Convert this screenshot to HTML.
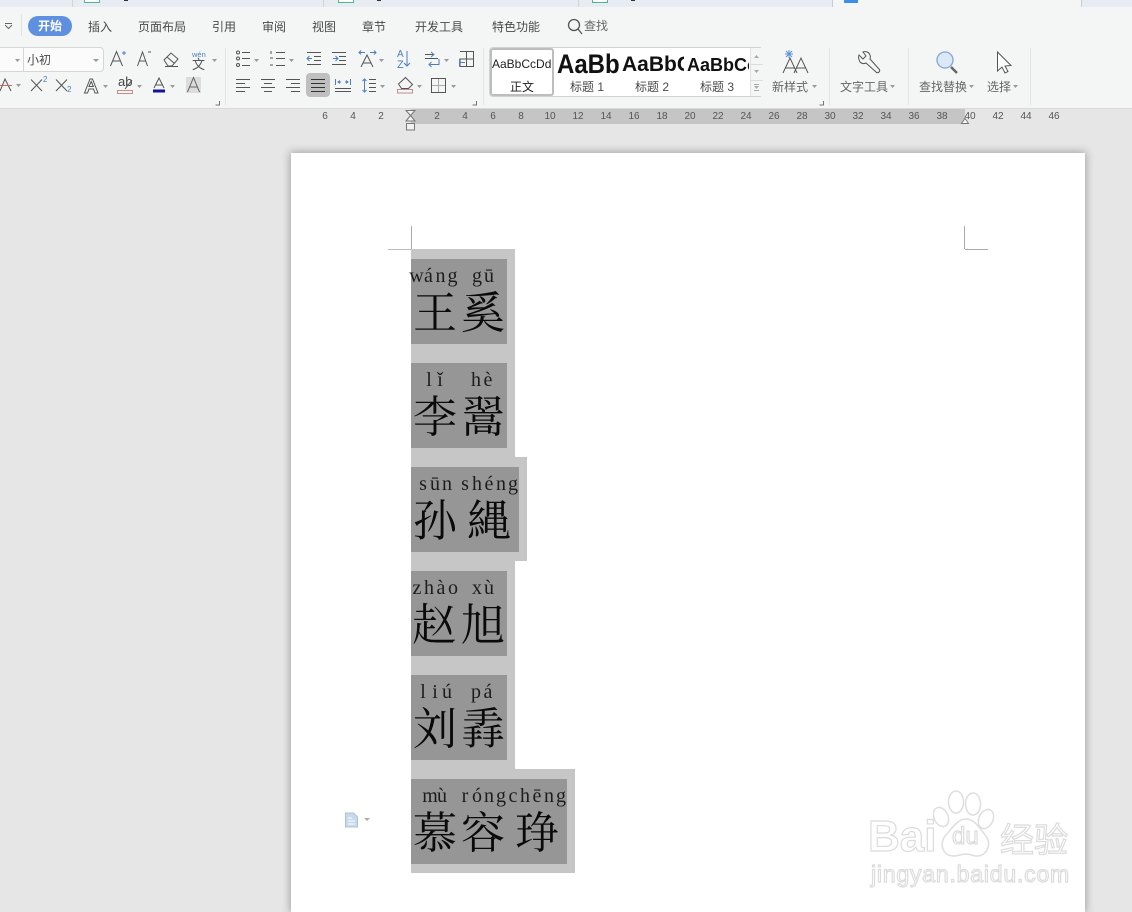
<!DOCTYPE html>
<html lang="zh"><head><meta charset="utf-8"><title>文档</title>
<style>
html,body{margin:0;padding:0;width:1132px;height:912px;overflow:hidden}
body{position:relative;background:#e6e6e6;font-family:"Liberation Sans","Noto Sans CJK SC",sans-serif;color:#4a4a4a}
.a{position:absolute;white-space:nowrap}
.t{position:absolute;white-space:nowrap;font-size:12px;line-height:16px;color:#4a4a4a}
#tabs{position:absolute;left:0;top:0;width:1132px;height:7px;background:#e7ebf3;border-bottom:1px solid #d3d6dc}
#rib{position:absolute;left:0;top:7px;width:1132px;height:102px;background:#f4f5f5;border-bottom:1px solid #d9d9d9;box-sizing:border-box}
#rul{position:absolute;left:411px;top:109px;width:554px;height:15px;background:#c5c5c5}
.n{position:absolute;top:110px;width:20px;text-align:center;font-size:10px;line-height:14px;color:#555}
#page{position:absolute;left:291px;top:153px;width:794px;height:759px;background:#fff;box-shadow:0 0 8px 1px rgba(0,0,0,.3)}
.o{position:absolute;background:#c6c6c6}
.i{position:absolute;background:#969696;left:411px;height:85px}
.hz{position:absolute;font-family:"Noto Serif CJK SC","Liberation Serif",serif;font-size:44px;line-height:50px;color:#0a0a0a;white-space:nowrap}
.wm{position:absolute;color:#fff;-webkit-text-stroke:1.2px #dcdcdc;white-space:nowrap}
</style></head><body>
<div id="tabs"></div>
<div class="a" style="left:72px;top:0;width:1px;height:7px;background:#cfd3da"></div>
<div class="a" style="left:323px;top:0;width:1px;height:7px;background:#cfd3da"></div>
<div class="a" style="left:578px;top:0;width:1px;height:7px;background:#cfd3da"></div>
<div class="a" style="left:832px;top:0;width:250px;height:8px;background:#f4f5f5;border-left:1px solid #c9ccd3;border-right:1px solid #c9ccd3;box-sizing:border-box"></div>
<div class="a" style="left:84px;top:0;width:14px;height:2px;background:#fff;border:1px solid #4fb58a;border-top:0"></div>
<div class="a" style="left:338px;top:0;width:14px;height:2px;background:#fff;border:1px solid #4fb58a;border-top:0"></div>
<div class="a" style="left:592px;top:0;width:14px;height:2px;background:#fff;border:1px solid #4fb58a;border-top:0"></div>
<div class="a" style="left:124px;top:0;width:4px;height:1px;background:#333"></div>
<div class="a" style="left:377px;top:0;width:4px;height:1px;background:#333"></div>
<div class="a" style="left:631px;top:0;width:4px;height:1px;background:#333"></div>
<div class="a" style="left:844px;top:0;width:14px;height:3px;background:#3d8ee8"></div>
<div id="rib"></div>

<div class="a" style="left:28px;top:16px;width:44px;height:20px;border-radius:10px;background:#5f90e0;color:#fff;font-size:12px;font-weight:bold;line-height:20px;text-align:center">开始</div>
<span class="t" style="left:88px;top:19px">插入</span>
<span class="t" style="left:138px;top:19px">页面布局</span>
<span class="t" style="left:212px;top:19px">引用</span>
<span class="t" style="left:262px;top:19px">审阅</span>
<span class="t" style="left:312px;top:19px">视图</span>
<span class="t" style="left:362px;top:19px">章节</span>
<span class="t" style="left:415px;top:19px">开发工具</span>
<span class="t" style="left:492px;top:19px">特色功能</span>
<span class="t" style="left:584px;top:18px;color:#666">查找</span>

<!-- font box -->
<div class="a" style="left:-10px;top:47px;width:112px;height:23px;background:#fbfbfb;border:1px solid #d6d6d6;border-radius:4px"></div>
<div class="a" style="left:23px;top:48px;width:1px;height:23px;background:#d6d6d6"></div>
<span class="t" style="left:27px;top:52px">小初</span>

<!-- Styles box -->
<div class="a" style="left:489px;top:47px;width:274px;height:50px;box-sizing:border-box;background:#fff;border:1px solid #d2d2d2;border-radius:4px"></div>
<div class="a" style="left:490px;top:48px;width:64px;height:48px;box-sizing:border-box;background:#fff;border:2px solid #bdbdbd;border-radius:3px"></div>
<div class="a" style="left:750px;top:48px;width:12px;height:48px;background:#f4f5f5;border-left:1px solid #e2e2e2;overflow:hidden"></div>
<div class="a" style="left:750px;top:64px;width:13px;height:1px;background:#ddd"></div>
<div class="a" style="left:750px;top:80px;width:13px;height:1px;background:#ddd"></div>
<div class="a" style="left:492px;top:56px;font-size:12px;line-height:16px;color:#222">AaBbCcDd</div>
<div class="a" style="left:557px;top:49px;width:63px;overflow:hidden;font-size:24px;font-weight:bold;line-height:32px;color:#111;transform:scaleY(1.12)">AaBbCc</div>
<div class="a" style="left:622px;top:52px;width:62px;overflow:hidden;font-size:21px;font-weight:bold;line-height:26px;color:#111">AaBbCc</div>
<div class="a" style="left:687px;top:53px;width:62px;overflow:hidden;font-size:18px;font-weight:bold;line-height:24px;color:#111">AaBbCc</div>
<span class="t" style="left:510px;top:79px;color:#222">正文</span>
<span class="t" style="left:570px;top:79px">标题 1</span>
<span class="t" style="left:635px;top:79px">标题 2</span>
<span class="t" style="left:700px;top:79px">标题 3</span>

<span class="t" style="left:772px;top:79px;color:#666">新样式</span>
<span class="t" style="left:840px;top:79px;color:#666">文字工具</span>
<span class="t" style="left:919px;top:79px;color:#666">查找替换</span>
<span class="t" style="left:987px;top:79px;color:#666">选择</span>

<div class="a" style="left:306px;top:73px;width:24px;height:24px;border-radius:4px;background:#bfbfbf"></div>
<div class="a" style="left:186px;top:77px;width:15px;height:16px;background:#dcdcdc"></div>

<!-- text glyph icons -->
<span class="a" style="left:192px;top:51px;font-size:7.500px;line-height:8px;color:#4a7fc0">wén</span>
<span class="a" style="left:192px;top:58px;font-size:13px;line-height:13px;color:#555">文</span>
<span class="a" style="left:43px;top:75px;font-size:8px;line-height:10px;color:#4a7fc0">2</span>
<span class="a" style="left:67px;top:85px;font-size:8px;line-height:10px;color:#4a7fc0">2</span>
<span class="a" style="left:118px;top:75px;font-size:13px;line-height:14px;color:#444">ab</span>
<span class="a" style="left:397px;top:50px;font-size:10px;line-height:10px;color:#4a7fc0">A</span>
<span class="a" style="left:397px;top:60px;font-size:11px;line-height:11px;color:#4a7fc0">Z</span>

<svg class="a" style="left:0;top:0" width="1132" height="135" viewBox="0 0 1132 135" fill="none" stroke="#555" stroke-width="1">
<path d="M5 23.500h7M5 25l3.500 3.500L12 25" stroke="#666"/>
<path d="M21.500 14V36" stroke="#e2e2e2"/>
<circle cx="574" cy="25" r="5.500" stroke="#555" stroke-width="1.300"/><path d="M578 29l4 5" stroke="#555" stroke-width="1.300"/>
<!-- dividers -->
<path d="M225.500 48V105M829.500 48V105M908.500 48V105M1030.500 48V105M483.500 48V105" stroke="#e4e4e4"/>
<!-- launchers -->
<path d="M219.500 101v4h-4M476.500 101v4h-4M823.500 101v4h-4" stroke="#777"/>
<!-- A+ A- -->
<path d="M110.500 66l6-14.500 6 14.500M112.500 61h8" stroke="#555"/><path d="M122 53h4M124 51v4" stroke="#4a7fc0"/>
<path d="M137.500 66l5-14 5 14M139 61h7" stroke="#555"/><path d="M148 52h3" stroke="#555"/>
<!-- eraser -->
<path d="M164 60l7-7 7 6-6 7h-4zM167 57l7 6M165 66.500h13" stroke="#555"/>
<!-- strike A at left -->
<path d="M0 91l5-12 6 12" stroke="#555"/><path d="M0 85.500h12" stroke="#d9645e"/>
<!-- X2 -->
<path d="M31 79.500l11 11.500M42 79.500L31 91M56 79.500l11 11.500M67 79.500L56 91" stroke="#555"/>
<!-- outlined A -->
<path d="M84.500 93l5.500-14h2.500l5.500 14h-3l-1.500-4h-4.500l-1.500 4zM89 86.500l2.200-5 2.200 5z" stroke="#555"/>
<!-- highlight -->
<path d="M117.500 90.500h15v3h-15z" stroke="#c98a8a"/><path d="M125 89l7-9" stroke="#555"/>
<!-- font colour -->
<path d="M154 88l5-10 5 10M155.500 85h7" stroke="#555"/>
<rect x="153" y="89.500" width="12" height="3" fill="#13139a" stroke="none"/>
<!-- shaded A -->
<path d="M187.500 92l6-14.500 6 14.500M189.500 87h8" stroke="#666"/>
<!-- lists -->
<g stroke="#555">
<circle cx="238" cy="52.500" r="1.500"/><circle cx="238" cy="58.500" r="1.500"/><circle cx="238" cy="65" r="1.500"/>
<path d="M242 52.500h8M242 58.500h8M242 65.500h8"/>
<path d="M271 51v3M270 58h3M270 65h3"/><path d="M276 52.500h9M276 58.500h9M276 65.500h9"/>
<path d="M307 52.500h14M314 56.500h7M314 60.500h7M307 64.500h14"/><path d="M312 58.500h-5m2.500-2.500l-2.500 2.500 2.500 2.500" stroke="#4a7fc0"/>
<path d="M332 52.500h14M339 56.500h7M339 60.500h7M332 64.500h14"/><path d="M333 58.500h5m-2.500-2.500l2.500 2.500-2.500 2.500" stroke="#4a7fc0"/>
<!-- widen A -->
<path d="M361 67l6-12 6 12M363 63h8" stroke="#555"/>
<path d="M359 52.500h6M370 52.500h6M361 50.500l-2 2 2 2M374 50.500l2 2-2 2" stroke="#4a7fc0"/>
<path d="M407 51v15m-3-3l3 3 3-3" stroke="#4a7fc0"/>
<path d="M425 54.500h8M425 58.500h13" stroke="#555"/><path d="M431 52l3 2.500-3 2.500M439 59v5.500h-10m2.500-2.500l-2.500 2.500 2.500 2.500" stroke="#4a7fc0"/>
<path d="M460 51.500h13.500V66.500H460V59h14M466.500 51.500v15" stroke="#555"/><path d="M459.500 59v7.500M460 62.500h5" stroke="#4a7fc0"/>
<path d="M236 79.500h14M236 83.500h9M236 87.500h14M236 91.500h9"/>
<path d="M261 79.500h14M264 83.500h8M261 87.500h14M264 91.500h8"/>
<path d="M286 79.500h14M291 83.500h9M286 87.500h14M291 91.500h9"/>
<path d="M311 79.500h14M311 83.500h14M311 87.500h14M311 91.500h14" stroke="#333"/>
<path d="M335 88.500h16M335 91.500h16"/><path d="M335.500 79v6M350.500 79v6M338 82h3m-1-1.500l-2 1.500 2 1.500M348 82h-3m1-1.500l2 1.500-2 1.500" stroke="#4a7fc0"/>
<path d="M369 79.500h7M369 83.500h7M369 87.500h7M369 91.500h7"/><path d="M364.500 79v13m-2-11l2-2 2 2m-4 9l2 2 2-2" stroke="#4a7fc0"/>
<path d="M398.500 84l7-6.500 7 7-4 4h-7z"/><path d="M397.500 89.500h15v3.500h-15z" stroke="#c08e8e"/>
<rect x="431.500" y="78.500" width="14" height="14"/><path d="M438.500 79v13M432 85.500h13" stroke="#aaa"/>
</g>
<!-- dropdown arrows -->
<g fill="#999" stroke="none">
<path d="M15 59h5l-2.500 3zM93 59h6l-3 3zM212 59h5l-2.500 3zM254 59h5l-2.500 3zM289 59h5l-2.500 3zM379 59h5l-2.500 3zM444 59h5l-2.500 3zM16 84h5l-2.500 3zM103 85h5l-2.500 3zM137 85h5l-2.500 3zM170 85h5l-2.500 3zM380 85h5l-2.500 3zM417 85h5l-2.500 3zM451 85h5l-2.500 3zM812 85h5l-2.500 3zM890 85h5l-2.500 3zM969 85h5l-2.500 3zM1013 85h5l-2.500 3z"/>
<path d="M754 58h5l-2.500-3zM754 70h5l-2.500 3z" fill="#aaa"/><path d="M754 86h5l-2.500 3z" fill="#aaa"/>
</g>
<path d="M754 84.500h5M754 90.500h5" stroke="#aaa"/>
<!-- 新样式 -->
<path d="M789 50v8M785 54h8M786 51l6 6M792 51l-6 6" stroke="#5a93d8"/>
<path d="M783 73l7-15 7 15M785.500 68h9M794 73l7-15 7 15M796.500 68h9" stroke="#555"/>
<!-- wrench -->
<path d="M859 55l4 4 3-3-3-4c3-1 6 0 7 3 1 2 0 3 0 4l9 10c1 1 1 2 0 3-1 1-2 1-3 0l-10-9c-2 1-4 1-6-1-1-2-2-5-1-7z" stroke="#555"/>
<!-- magnifier -->
<circle cx="945" cy="60" r="8" fill="#dbe8f5" stroke="#7fa8d2" stroke-width="1.300"/>
<path d="M951 67l6 6" stroke="#666" stroke-width="2.500"/>
<!-- cursor -->
<path d="M997.500 52v19l4.500-4 3 6 3-1.500-3-5.500 6-.500z" stroke="#555" fill="#fff"/>
</svg>

<div id="rul"></div>
<svg class="a" style="left:400px;top:109px" width="580" height="24" viewBox="400 109 580 24" fill="none" stroke="#777">
<path d="M406 110.500h9l-4.500 5 4.500 5.500h-9l4.500-5.500z" fill="#f2f2f2"/>
<path d="M406.500 123.500h8v6.500h-8z" fill="#f2f2f2"/>
<path d="M961.500 123.500l3.500-5 3.500 5z" fill="#fff"/>
</svg>
<span class="n" style="left:315px">6</span><span class="n" style="left:343px">4</span><span class="n" style="left:371px">2</span>
<span class="n" style="left:427px">2</span><span class="n" style="left:455px">4</span><span class="n" style="left:483px">6</span><span class="n" style="left:511px">8</span><span class="n" style="left:540px">10</span><span class="n" style="left:568px">12</span><span class="n" style="left:596px">14</span><span class="n" style="left:624px">16</span><span class="n" style="left:652px">18</span><span class="n" style="left:680px">20</span><span class="n" style="left:708px">22</span><span class="n" style="left:736px">24</span><span class="n" style="left:764px">26</span><span class="n" style="left:792px">28</span><span class="n" style="left:820px">30</span><span class="n" style="left:848px">32</span><span class="n" style="left:876px">34</span><span class="n" style="left:904px">36</span><span class="n" style="left:932px">38</span><span class="n" style="left:960px">40</span><span class="n" style="left:988px">42</span><span class="n" style="left:1016px">44</span><span class="n" style="left:1044px">46</span>

<div id="page"></div>
<!-- crop marks -->
<div class="a" style="left:411px;top:226px;width:1px;height:23px;background:#aaa"></div>
<div class="a" style="left:388px;top:249px;width:23px;height:1px;background:#bbb"></div>
<div class="a" style="left:964px;top:226px;width:1px;height:23px;background:#aaa"></div>
<div class="a" style="left:965px;top:249px;width:23px;height:1px;background:#aaa"></div>

<!-- selection -->
<div class="o" style="left:411px;top:249px;width:104px;height:208px"></div>
<div class="o" style="left:411px;top:457px;width:116px;height:104px"></div>
<div class="o" style="left:411px;top:561px;width:104px;height:208px"></div>
<div class="o" style="left:411px;top:769px;width:164px;height:104px"></div>
<div class="i" style="top:259px;width:96px"></div>
<div class="i" style="top:363px;width:96px"></div>
<div class="i" style="top:467px;width:108px"></div>
<div class="i" style="top:571px;width:96px"></div>
<div class="i" style="top:675px;width:96px"></div>
<div class="i" style="top:779px;width:156px"></div>

<svg class="a" style="left:0;top:0" width="1132" height="912" viewBox="0 0 1132 912" font-family="'Liberation Serif',serif" font-size="20" fill="#1c1c1c" text-anchor="middle">
<text x="416.500 428.500 440.500 452.500" y="282">wáng</text><text x="477 489" y="282">gū</text>
<text x="429 440" y="386">lǐ</text><text x="476 488" y="386">hè</text>
<text x="423 435 447" y="490">sūn</text><text x="465 477 489 501 513" y="490">shéng</text>
<text x="417 429 441 453" y="594">zhào</text><text x="477 489" y="594">xù</text>
<text x="423 435 447" y="698">liú</text><text x="476 488" y="698">pá</text>
<text x="430 442" y="802">mù</text><text x="465 477 489 501 513 525 537 549 561" y="802">róngchēng</text>
</svg>

<span class="hz" style="left:413px;top:284px">王</span><span class="hz" style="left:461px;top:284px">奚</span>
<span class="hz" style="left:413px;top:388px">李</span><span class="hz" style="left:461px;top:388px">翯</span>
<span class="hz" style="left:413px;top:492px">孙</span><span class="hz" style="left:467px;top:492px">縄</span>
<span class="hz" style="left:412px;top:596px">赵</span><span class="hz" style="left:461px;top:596px">旭</span>
<span class="hz" style="left:413px;top:700px">刘</span><span class="hz" style="left:461px;top:700px">掱</span>
<span class="hz" style="left:413px;top:804px">慕</span><span class="hz" style="left:461px;top:804px">容</span><span class="hz" style="left:515px;top:804px">琤</span>

<!-- doc icon -->
<svg class="a" style="left:344px;top:812px" width="30" height="16" viewBox="0 0 30 16">
<path d="M1.500 1h8l4 4v10h-12z" fill="#c7d9ea" stroke="#a9c3dc"/><path d="M4 6h4M4 9h7M4 12h7" stroke="#fff"/>
<path d="M20 6h6l-3 3z" fill="#aaa"/>
</svg>

<!-- watermark -->
<svg class="a" style="left:933px;top:788px" width="80" height="72" viewBox="0 0 80 72" fill="#fff" stroke="#dedede" stroke-width="1.500">
<ellipse cx="23" cy="14" rx="7.500" ry="11"/><ellipse cx="40" cy="16" rx="7.500" ry="11"/>
<ellipse cx="8" cy="29" rx="7" ry="10" transform="rotate(-25 8 29)"/><ellipse cx="53" cy="31" rx="7" ry="10" transform="rotate(25 53 31)"/>
<path d="M33 31c9 0 14 10 20 17 6 8 1 20-9 20-4 0-7-2-11-2s-8 2-12 2c-11 0-15-11-9-20 6-6 12-17 21-17z"/>
</svg>
<span class="wm" style="left:868px;top:812px;font-size:44px;line-height:50px;font-weight:bold">Bai</span>
<span class="wm" style="left:952px;top:823px;font-size:24px;line-height:28px">du</span>
<span class="wm" style="left:1000px;top:818px;font-size:34px;line-height:40px;font-family:'Noto Sans CJK SC',sans-serif">经验</span>
<span class="wm" style="left:871px;top:860px;font-size:23px;line-height:28px;letter-spacing:.8px">jingyan.baidu.com</span>
</body></html>
